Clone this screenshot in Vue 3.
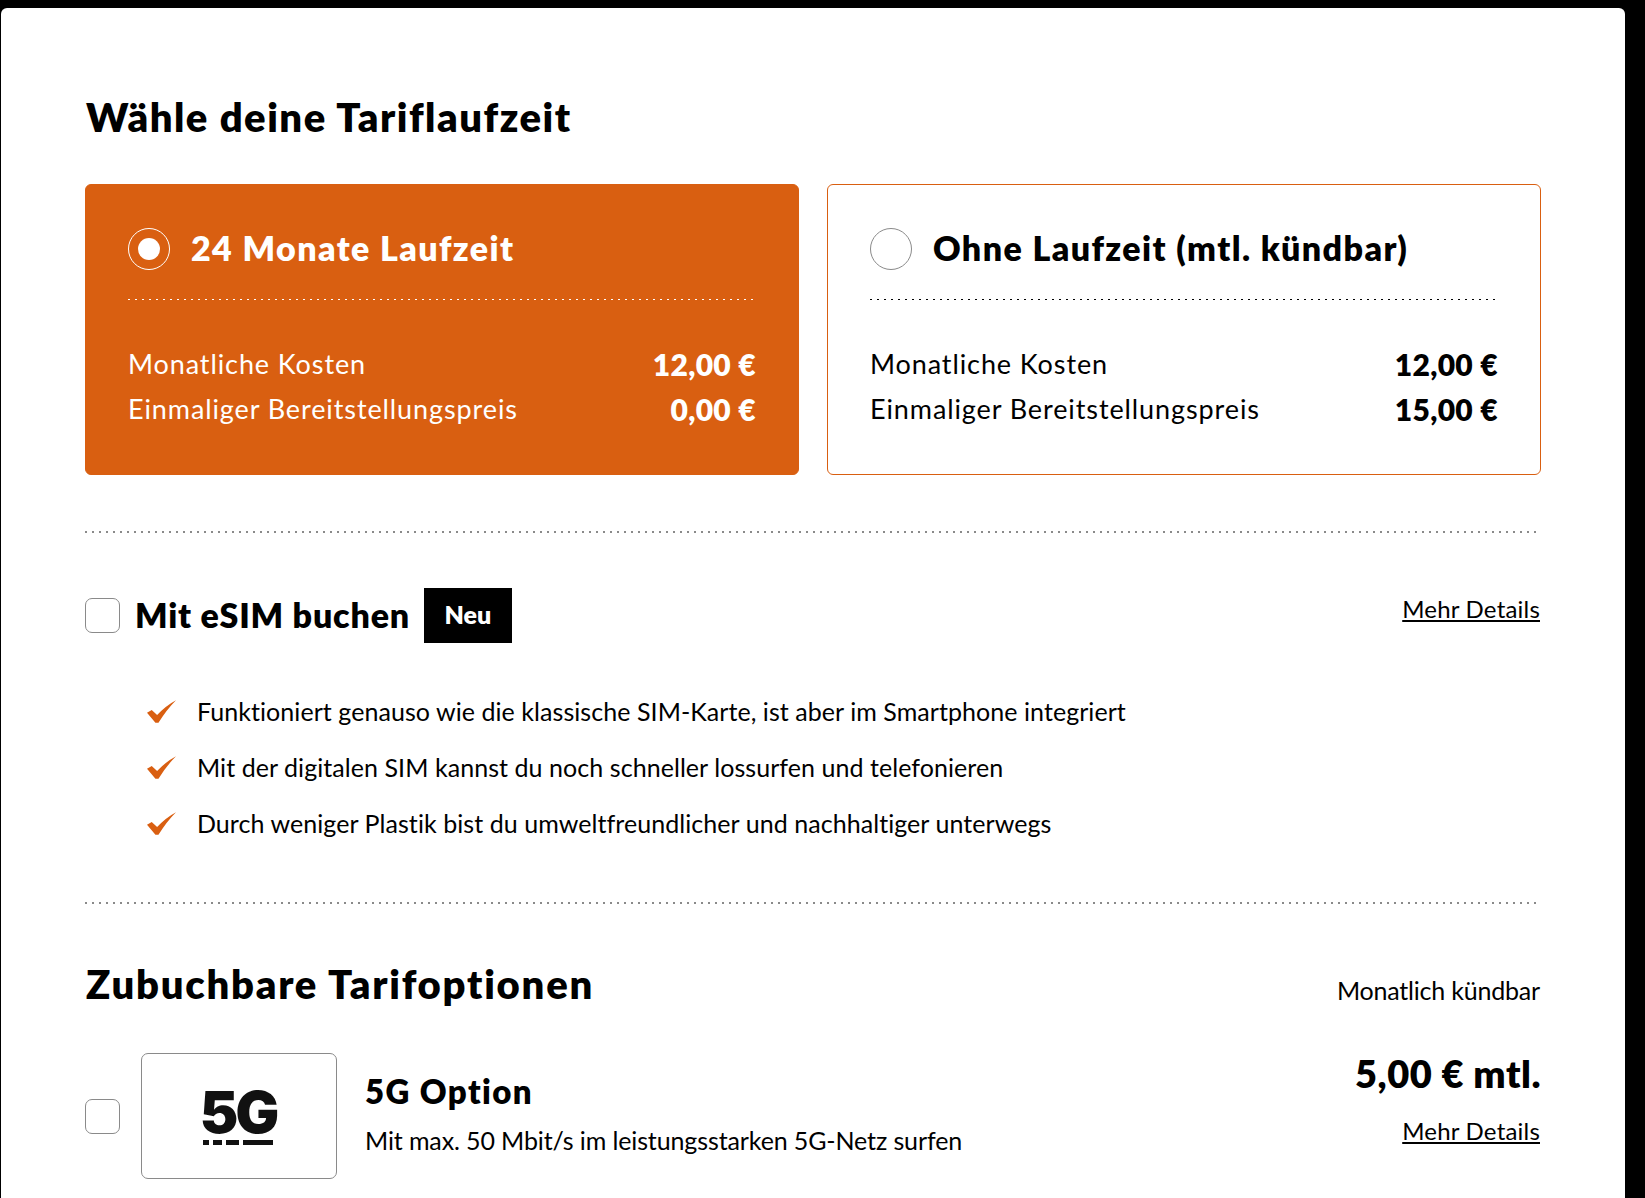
<template>
  <div class="page">
    <main class="panel">
      <h1 class="title">Wähle deine Tariflaufzeit</h1>

      <div class="plans">
        <div v-for="plan in plans" :key="plan.name" class="plan" :class="{ active: plan.active }">
          <div class="plan-head">
            <span class="radio"><span v-if="plan.active" class="radio-dot"></span></span>
            <span class="plan-name">{{ plan.name }}</span>
          </div>
          <div class="plan-rows">
            <div class="plan-row">
              <span>Monatliche Kosten</span>
              <b>{{ plan.monthly }}</b>
            </div>
            <div class="plan-row">
              <span>Einmaliger Bereitstellungspreis</span>
              <b>{{ plan.setup }}</b>
            </div>
          </div>
        </div>
      </div>

      <section class="esim">
        <div class="esim-head">
          <span class="checkbox"></span>
          <span class="esim-name">Mit eSIM buchen</span>
          <span class="badge">Neu</span>
          <a class="details esim-details">Mehr Details</a>
        </div>
        <ul class="benefits">
          <li v-for="item in benefits" :key="item">
            <svg class="check" viewBox="0 0 86 67" width="29" height="23">
              <path d="M0 37 L14 29 L30 44 Q56 16 86 0 Q58 28 34 67 L25 67 Z" fill="#d95f11" />
            </svg>
            <span>{{ item }}</span>
          </li>
        </ul>
      </section>

      <section class="options">
        <div class="options-head">
          <h2 class="title">Zubuchbare Tarifoptionen</h2>
          <span class="options-note">Monatlich kündbar</span>
        </div>
        <div class="option">
          <span class="checkbox"></span>
          <div class="option-logo">
            <span class="logo-text">5G</span>
            <span class="logo-bars"><i></i><i></i><i></i><i></i></span>
          </div>
          <div class="option-text">
            <div class="option-name">5G Option</div>
            <div class="option-desc">Mit max. 50 Mbit/s im leistungsstarken 5G-Netz surfen</div>
          </div>
          <div class="option-side">
            <div class="option-price">5,00 € mtl.</div>
            <a class="details">Mehr Details</a>
          </div>
        </div>
      </section>
    </main>
  </div>
</template>

<script setup>
const plans = [
  { name: '24 Monate Laufzeit', monthly: '12,00 €', setup: '0,00 €', active: true },
  { name: 'Ohne Laufzeit (mtl. kündbar)', monthly: '12,00 €', setup: '15,00 €', active: false },
];

const benefits = [
  'Funktioniert genauso wie die klassische SIM-Karte, ist aber im Smartphone integriert',
  'Mit der digitalen SIM kannst du noch schneller lossurfen und telefonieren',
  'Durch weniger Plastik bist du umweltfreundlicher und nachhaltiger unterwegs',
];
</script>

<style>
html,
body {
  margin: 0;
  background: #000;
}
</style>

<style scoped>
.page {
  height: 1198px;
  overflow: hidden;
  background: #000;
  padding: 8px 20px 0 1px;
  box-sizing: border-box;
  font-family: Lato, "Liberation Sans", sans-serif;
  font-variant-ligatures: none;
  color: #000;
}

.panel {
  height: 100%;
  background: #fff;
  border-radius: 6px 6px 0 0;
  padding: 0 84px;
  box-sizing: border-box;
  overflow: hidden;
}

.title {
  margin: 0;
  padding-left: 1px;
  font-size: 40px;
  line-height: 48px;
  font-weight: 800;
  letter-spacing: 1.5px;
}

.options .title {
  letter-spacing: 1.75px;
}

.panel > .title {
  padding-top: 85px;
  margin-bottom: 43px;
}

.plans {
  display: grid;
  grid-template-columns: 1fr 1fr;
  gap: 28px;
}

.plan {
  height: 291px;
  box-sizing: border-box;
  border: 1px solid #d95f11;
  border-radius: 6px;
  padding: 43px 42px 0;
}

.plan.active {
  background: #d95f11;
  color: #fff;
}

.plan-head {
  display: flex;
  align-items: center;
  gap: 21px;
  padding-bottom: 30px;
  background: repeating-linear-gradient(90deg, #000 0 2px, transparent 2px 7px) left bottom / 100% 1px no-repeat;
}

.active .plan-head {
  background-image: repeating-linear-gradient(90deg, #fff 0 2px, transparent 2px 7px);
}

.radio {
  width: 42px;
  height: 42px;
  box-sizing: border-box;
  border: 1px solid #8a8a8a;
  border-radius: 50%;
  display: flex;
  align-items: center;
  justify-content: center;
}

.active .radio {
  border-color: #fff;
}

.radio-dot {
  width: 22px;
  height: 22px;
  border-radius: 50%;
  background: #fff;
}

.plan-name {
  margin-bottom: 2px;
  font-size: 34px;
  line-height: 40px;
  font-weight: 800;
  letter-spacing: 1.4px;
}

.plan-rows {
  padding-top: 49px;
  display: flex;
  flex-direction: column;
  gap: 15px;
}

.plan-row {
  display: flex;
  justify-content: space-between;
  font-size: 27px;
  line-height: 30px;
  letter-spacing: 0.9px;
}

.plan-row b {
  font-weight: 800;
  font-size: 30px;
  letter-spacing: 0.3px;
}

.esim {
  margin-top: 56px;
  padding-top: 57px;
  background: repeating-linear-gradient(90deg, #8a8a8a 0 2px, transparent 2px 7px) left top / 100% 2px no-repeat;
  margin-right: 4px;
}

.esim-head {
  display: flex;
  align-items: center;
  height: 55px;
}

.checkbox {
  width: 35px;
  height: 35px;
  flex: none;
  box-sizing: border-box;
  border: 1px solid #8a8a8a;
  border-radius: 7px;
}

.esim-name {
  margin-left: 15px;
  margin-bottom: 2px;
  font-size: 34px;
  font-weight: 800;
  letter-spacing: 0.8px;
}

.badge {
  margin-left: 14px;
  width: 88px;
  height: 55px;
  box-sizing: border-box;
  padding-bottom: 3px;
  background: #000;
  color: #fff;
  font-size: 25px;
  font-weight: 800;
  display: flex;
  align-items: center;
  justify-content: center;
}

.details {
  font-size: 24px;
  line-height: 30px;
  letter-spacing: 0.2px;
  text-decoration: underline;
}

.esim-details {
  margin-left: auto;
  margin-right: -3px;
  align-self: flex-start;
  margin-top: 6px;
}

.benefits {
  list-style: none;
  margin: 40px 0 0;
  padding: 0 0 0 62px;
}

.benefits li {
  display: flex;
  align-items: center;
  gap: 21px;
  height: 56px;
  font-size: 25px;
  letter-spacing: 0.06px;
}

.options {
  margin-top: 51px;
  padding-top: 58px;
  background: repeating-linear-gradient(90deg, #8a8a8a 0 2px, transparent 2px 7px) left top / calc(100% - 4px) 2px no-repeat;
}

.options-head {
  display: flex;
  justify-content: space-between;
  align-items: flex-end;
}

.options-note {
  margin-right: 1px;
  font-size: 25px;
  line-height: 36px;
  letter-spacing: -0.2px;
}

.option {
  margin-top: 45px;
  display: flex;
  align-items: flex-start;
}

.option > .checkbox {
  margin-top: 46px;
}

.option-logo {
  margin-left: 21px;
  width: 196px;
  height: 126px;
  flex: none;
  box-sizing: border-box;
  border: 1px solid #8a8a8a;
  border-radius: 7px;
  display: flex;
  flex-direction: column;
  align-items: center;
  justify-content: center;
}

.logo-text {
  font-family: Inter, sans-serif;
  font-size: 58px;
  line-height: 50px;
  font-weight: 900;
  letter-spacing: -3px;
  color: #111;
  margin-right: 2px;
}

.logo-bars {
  display: flex;
  gap: 4px;
  margin-top: 3px;
  margin-right: 2px;
}

.logo-bars i {
  height: 5px;
  background: #111;
  width: 6px;
}

.logo-bars i:nth-child(2) {
  width: 9px;
}

.logo-bars i:nth-child(3) {
  width: 13px;
}

.logo-bars i:nth-child(4) {
  width: 30px;
}

.option-text {
  margin-left: 28px;
  padding-top: 18px;
  flex: 1;
}

.option-name {
  font-size: 33px;
  line-height: 40px;
  font-weight: 800;
  letter-spacing: 1.4px;
}

.option-desc {
  margin-top: 14px;
  font-size: 25px;
  line-height: 30px;
  letter-spacing: -0.12px;
}

.option-side {
  margin-top: -2px;
  text-align: right;
}

.option-price {
  font-size: 38px;
  line-height: 44px;
  font-weight: 800;
  letter-spacing: 0.5px;
}

.option-side .details {
  display: inline-block;
  margin-top: 21px;
  margin-right: 1px;
}
</style>
